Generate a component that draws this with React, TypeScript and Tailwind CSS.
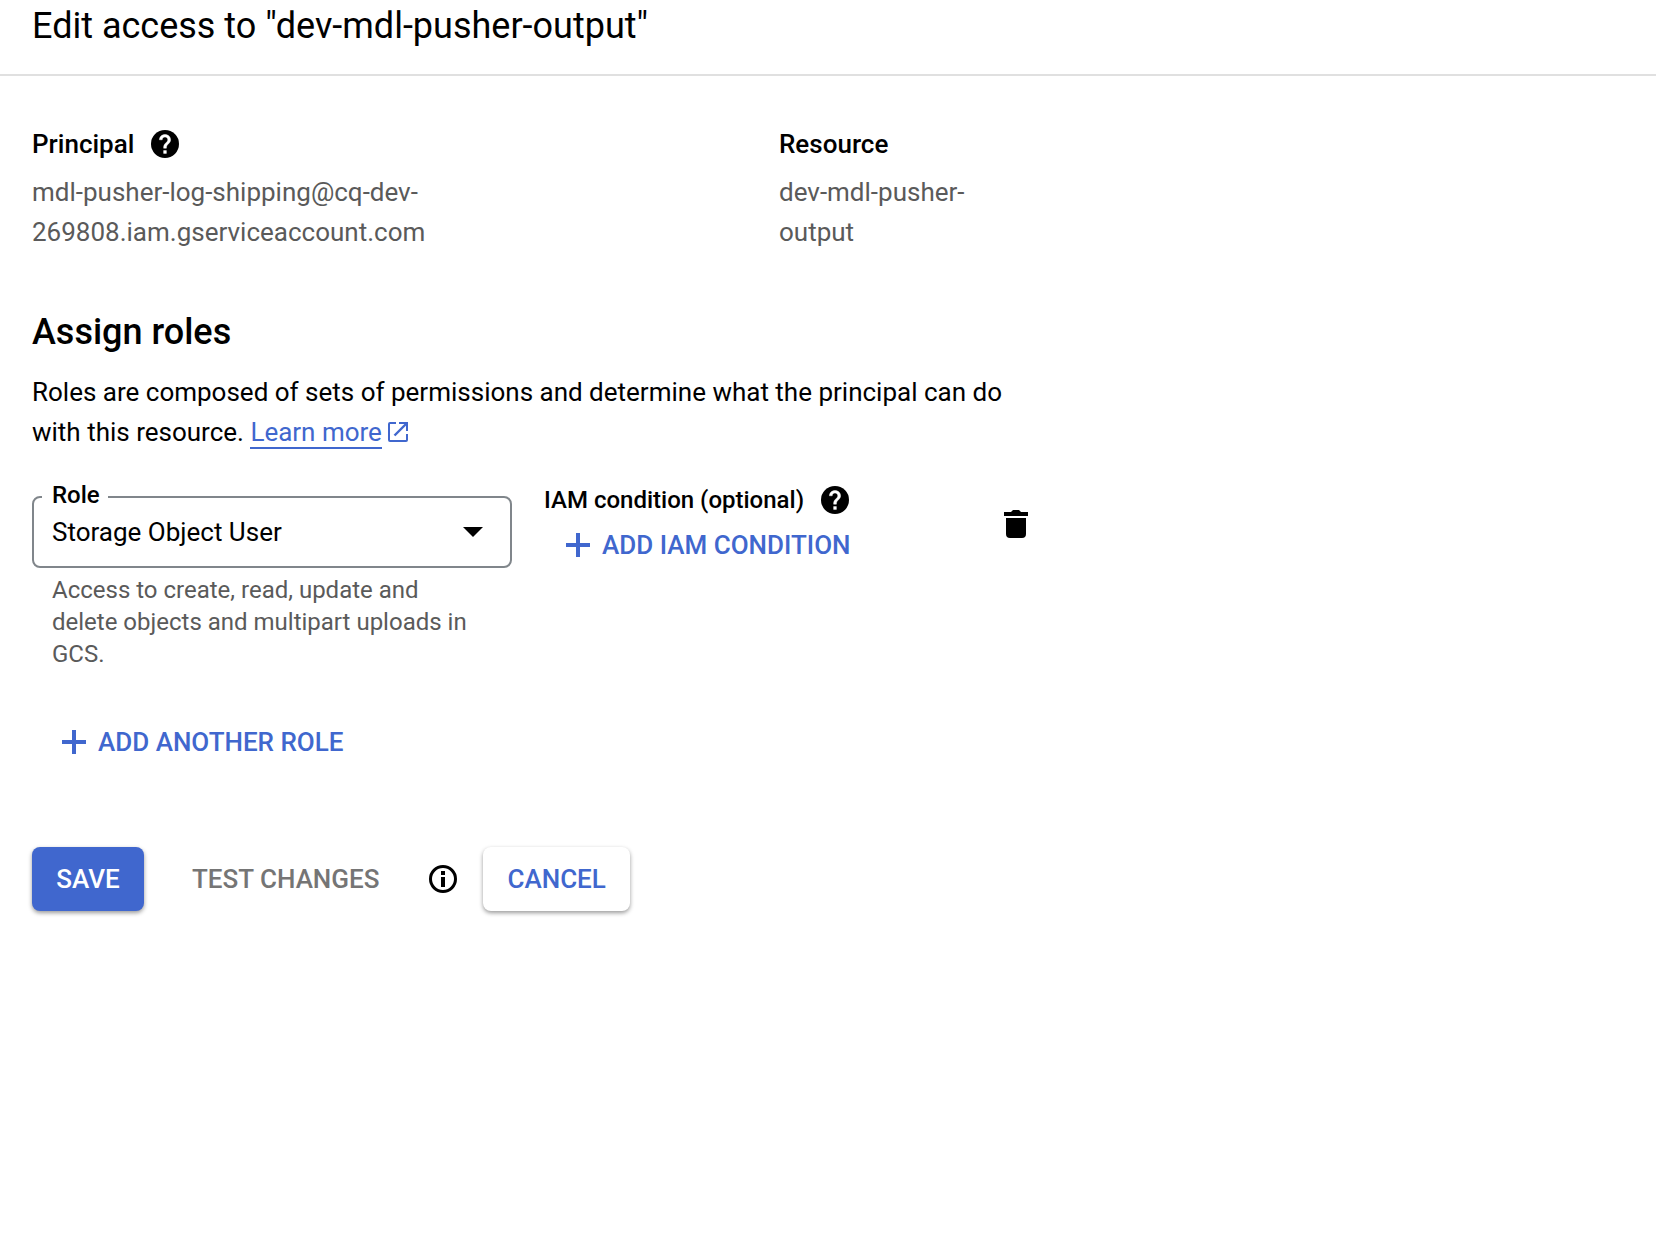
import type { ReactNode } from "react";

function HelpIcon() {
  return (
    <svg viewBox="2 2 20 20" className="size-7" aria-hidden="true">
      <circle cx="12" cy="12" r="10" fill="currentColor" />
      <path
        d="M13 18.700h-2v-2h2zM15.07 11.25l-.9.92C13.45 12.9 13 13.5 13 15h-2v-.5c0-1.1.45-2.1 1.17-2.83l1.24-1.26c.37-.36.59-.86.59-1.41 0-1.1-.9-2-2-2s-2 .9-2 2H8c0-2.21 1.79-3.800 4-3.800s4 1.590 4 3.800c0 .88-.36 1.68-.93 2.25z"
        fill="#fff"
        stroke="#fff"
        strokeWidth="0.3"
      />
    </svg>
  );
}

function InfoIcon() {
  return (
    <svg viewBox="0 0 28 28" className="size-7" aria-hidden="true">
      <circle cx="14" cy="14" r="12.5" fill="none" stroke="currentColor" strokeWidth="3" />
      <path d="M12 6h4v4h-4zM12 12h4v10h-4z" fill="currentColor" />
    </svg>
  );
}

function PlusIcon() {
  return (
    <svg viewBox="0 0 24 24" className="size-6" aria-hidden="true">
      <path d="M10 0h4v10h10v4H14v10h-4V14H0v-4h10z" fill="currentColor" />
    </svg>
  );
}

function TrashIcon() {
  return (
    <svg viewBox="0 0 24 28" className="h-7 w-6" aria-hidden="true">
      <path d="M0 2h7l2-2h6l2 2h7v4H0zM2 8h20v16a4 4 0 0 1-4 4H6a4 4 0 0 1-4-4z" fill="currentColor" />
    </svg>
  );
}

function ExternalIcon() {
  return (
    <svg viewBox="0 0 20 20" className="mb-0.5 size-5" aria-hidden="true">
      <path d="M8 1H2a1 1 0 0 0-1 1v16a1 1 0 0 0 1 1h16a1 1 0 0 0 1-1v-6M11 1h8v8" fill="none" stroke="currentColor" strokeWidth="2" />
      <path d="M19 1L6.5 13.5" fill="none" stroke="currentColor" strokeWidth="2.4" />
    </svg>
  );
}

function TextButton({ children }: { children: ReactNode }) {
  return (
    <button type="button" className="flex h-16 items-center gap-3 px-4 font-medium text-[#4067ce]">
      <PlusIcon />
      {children}
    </button>
  );
}

export default function App() {
  return (
    <div className="min-h-screen bg-white font-['Roboto',sans-serif] text-[26px] leading-10 text-black">
      <header className="border-b-2 border-[#e0e0e0] px-8 pb-6 pt-0.5">
        <h1 className="text-4xl leading-12">Edit access to "dev-mdl-pusher-output"</h1>
      </header>
      <main className="max-w-[1092px] px-8 pt-12">
        <dl className="grid grid-cols-[747px_1fr]">
          <div>
            <dt className="flex items-center gap-[17px] font-medium">
              Principal
              <button type="button" aria-label="About principals"><HelpIcon /></button>
            </dt>
            <dd className="mt-2 max-w-[440px] text-[#5a5a5a]">mdl-pusher-log-shipping@cq-dev-269808.iam.gserviceaccount.com</dd>
          </div>
          <div>
            <dt className="font-medium">Resource</dt>
            <dd className="mt-2 max-w-[220px] text-[#5a5a5a]">dev-mdl-pusher-output</dd>
          </div>
        </dl>

        <section className="pt-14">
          <h2 className="text-4xl font-medium leading-12">Assign roles</h2>
          <p className="mt-4 max-w-[1000px]">
            Roles are composed of sets of permissions and determine what the principal can do with this resource.{" "}
            <a href="#learn-more" className="inline-flex items-center gap-1.5 leading-[30px] text-[#4067ce]">
              <span className="border-b-2 border-[#4067ce]">Learn more</span>
              <ExternalIcon />
            </a>
          </p>

          <div className="mt-9 flex items-start">
            <div className="w-[480px]">
              <div className="relative mt-2 h-[72px] rounded-lg border-2 border-[#80868b]">
                <label htmlFor="role" className="absolute left-2 top-[-17px] bg-white pl-2.5 pr-2 text-2xl font-medium leading-7">Role</label>
                <select id="role" className="h-full w-full appearance-none rounded-lg bg-transparent px-[18px] outline-none">
                  <option>Storage Object User</option>
                </select>
                <svg viewBox="0 0 20 10" className="pointer-events-none absolute right-[27px] top-[29px] h-2.5 w-5" aria-hidden="true">
                  <path d="M0 0h20L10 10z" fill="currentColor" />
                </svg>
              </div>
              <p className="mt-1.5 pl-5 pr-10 text-2xl leading-8 text-[#5a5a5a]">
                Access to create, read, update and delete objects and multipart uploads in GCS.
              </p>
            </div>
            <div className="ml-8 flex-1">
              <div className="flex h-6 items-center gap-[17px] text-2xl font-medium">
                IAM condition (optional)
                <button type="button" aria-label="About IAM conditions"><HelpIcon /></button>
              </div>
              <div className="pl-1.5 pt-px">
                <TextButton>ADD IAM CONDITION</TextButton>
              </div>
            </div>
            <button type="button" aria-label="Delete role" className="mr-8 mt-[22px]"><TrashIcon /></button>
          </div>

          <div className="mt-10 pl-3.5">
            <TextButton>ADD ANOTHER ROLE</TextButton>
          </div>
        </section>

        <div className="mt-[73px] flex h-16 items-center font-medium">
          <button type="button" className="h-16 min-w-28 rounded-lg bg-[#4067ce] px-6 text-white shadow-[0_2px_4px_rgba(0,0,0,0.4)]">SAVE</button>
          <button type="button" disabled className="ml-6 h-16 px-6 text-[#757575]">TEST CHANGES</button>
          <button type="button" aria-label="About testing changes" className="mx-[26px]"><InfoIcon /></button>
          <button type="button" className="h-16 rounded-lg bg-white px-6 text-[#4067ce] shadow-[0_2px_4px_rgba(0,0,0,0.4)]">CANCEL</button>
        </div>
      </main>
    </div>
  );
}
